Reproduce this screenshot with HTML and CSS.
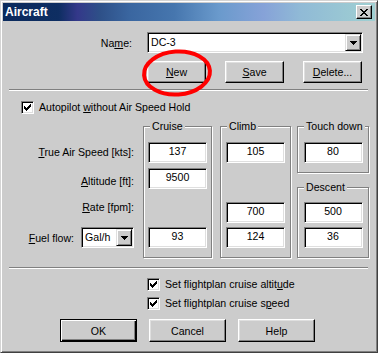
FILE: index.html
```html
<!DOCTYPE html>
<html>
<head lang="en">
    <meta charset="UTF-8">
    <title>Aircraft</title>
    <link rel="stylesheet" href="styles.css">
</head>
<body>
<div class="window">
    <div class="titleBar">
        <span class="title">Aircraft</span>
        <span class="closeBtn">
            <svg width="8" height="7" viewBox="0 0 8 7"><path d="M0 0h2v1H0z M6 0h2v1H6z M1 1h2v1H1z M5 1h2v1H5z M2 2h4v1H2z M3 3h2v1H3z M2 4h4v1H2z M1 5h2v1H1z M5 5h2v1H5z M0 6h2v1H0z M6 6h2v1H6z"/></svg>
        </span>
    </div>
    <div class="content">
        <div class="nameRow">
            <span class="nameLabel">Na<u>m</u>e:</span>
            <div class="combo nameCombo">
                <span class="comboText">DC-3</span>
                <span class="dropBtn"><svg width="7" height="4" viewBox="0 0 7 4"><path d="M0 0h7v1H0z M1 1h5v1H1z M2 2h3v1H2z M3 3h1v1H3z"/></svg></span>
            </div>
        </div>
        <div class="btnRow">
            <button class="btn"><u>N</u>ew</button>
            <button class="btn"><u>S</u>ave</button>
            <button class="btn"><u>D</u>elete...</button>
        </div>
        <div class="sep"></div>
        <div class="check autopilot">
            <span class="box"><svg width="11" height="11" viewBox="0 0 11 11"><path d="M2 4h1v3H2z M3 5h1v3H3z M4 6h1v3H4z M5 5h1v3H5z M6 4h1v3H6z M7 3h1v3H7z M8 2h1v3H8z"/></svg></span>
            <span>Autopilot <u>w</u>ithout Air Speed Hold</span>
        </div>
        <div class="groups">
            <div class="labels">
                <div class="lbl"><u>T</u>rue Air Speed [kts]:</div>
                <div class="lbl lblAlt"><u>A</u>ltitude [ft]:</div>
                <div class="lbl lblRate"><u>R</u>ate [fpm]:</div>
                <div class="fuelRow">
                    <span><u>F</u>uel flow:</span>
                    <div class="combo fuelCombo">
                        <span class="comboText">Gal/h</span>
                        <span class="dropBtn"><svg width="7" height="4" viewBox="0 0 7 4"><path d="M0 0h7v1H0z M1 1h5v1H1z M2 2h3v1H2z M3 3h1v1H3z"/></svg></span>
                    </div>
                </div>
            </div>
            <div class="group cruise">
                <span class="legend">Cruise</span>
                <div class="field">137</div>
                <div class="field gap5">9500</div>
                <div class="field gap38">93</div>
            </div>
            <div class="group climb">
                <span class="legend">Climb</span>
                <div class="field">105</div>
                <div class="field gap39">700</div>
                <div class="field gap4">124</div>
            </div>
            <div class="rightCol">
                <div class="group touchdown">
                    <span class="legend">Touch down</span>
                    <div class="field">80</div>
                </div>
                <div class="group descent">
                    <span class="legend">Descent</span>
                    <div class="field">500</div>
                    <div class="field gap4">36</div>
                </div>
            </div>
        </div>
        <div class="sep sep2"></div>
        <div class="check flightCheck">
            <span class="box"><svg width="11" height="11" viewBox="0 0 11 11"><path d="M2 4h1v3H2z M3 5h1v3H3z M4 6h1v3H4z M5 5h1v3H5z M6 4h1v3H6z M7 3h1v3H7z M8 2h1v3H8z"/></svg></span>
            <span>Set flightplan cruise altit<u>u</u>de</span>
        </div>
        <div class="check flightCheck speedCheck">
            <span class="box"><svg width="11" height="11" viewBox="0 0 11 11"><path d="M2 4h1v3H2z M3 5h1v3H3z M4 6h1v3H4z M5 5h1v3H5z M6 4h1v3H6z M7 3h1v3H7z M8 2h1v3H8z"/></svg></span>
            <span>Set flightplan cruise s<u>p</u>eed</span>
        </div>
        <div class="bottomRow">
            <button class="btn bigBtn defaultBtn">OK</button>
            <button class="btn bigBtn">Cancel</button>
            <button class="btn bigBtn">Help</button>
        </div>
    </div>
    <svg class="mark" width="78" height="54" viewBox="0 0 78 54">
        <ellipse cx="37" cy="26" rx="33" ry="21.5" fill="none" stroke="#f00" stroke-width="4" transform="rotate(-4 37 26)"/>
    </svg>
</div>
</body>
</html>
```

FILE: styles.css
```css
*{padding: 0;margin: 0;}
body{
    background: #cccccc;
    font-family: "Liberation Sans", Arial, sans-serif;
    font-size: 10.6px;
    color: #000;
}
.window{
    position: relative;
    box-sizing: border-box;
    width: 378px;
    height: 353px;
    padding: 2px;
    background: #cccccc;
    border: 1px solid;
    border-color: #d4d4d4 #404040 #404040 #d4d4d4;
    box-shadow: inset 1px 1px #fff, inset -1px -1px #808080;
}
.titleBar{
    display: flex;
    align-items: center;
    justify-content: space-between;
    height: 18px;
    padding-left: 2px;
    background: linear-gradient(to right, #0a2a5c 0%, #0e2e62 15%, #34388a 20%, #2e5088 26%, #3a66a0 34%, #4676ae 46%, #6a9acc 58%, #86a2d8 70%, #90bad6 80%, #a0d0d2 100%);
}
.title{
    color: #fff;
    font-weight: bold;
    font-size: 12px;
    line-height: 18px;
}
.closeBtn{
    box-sizing: border-box;
    display: flex;
    align-items: center;
    justify-content: center;
    width: 16px;
    height: 14px;
    margin-right: 3px;
    background: #cccccc;
    border: 1px solid;
    border-color: #fff #000 #000 #fff;
    box-shadow: inset -1px -1px #808080;
}
.nameRow{
    display: flex;
    align-items: center;
    margin-top: 11px;
    height: 21px;
}
.nameLabel{
    width: 129px;
    text-align: right;
}
.combo{
    box-sizing: border-box;
    display: flex;
    align-items: center;
    justify-content: space-between;
    height: 21px;
    background: #fff;
    border: 1px solid;
    border-color: #808080 #fff #fff #808080;
    box-shadow: inset 1px 1px #000, inset -1px -1px #dfdfdf;
    padding: 1px;
}
.nameCombo{
    width: 216px;
    margin-left: 15px;
}
.comboText{
    padding-left: 2px;
    padding-bottom: 2px;
}
.dropBtn{
    box-sizing: border-box;
    display: flex;
    align-items: center;
    justify-content: center;
    width: 16px;
    height: 17px;
    background: #cccccc;
    border: 1px solid;
    border-color: #dfdfdf #000 #000 #dfdfdf;
    box-shadow: inset 1px 1px #fff, inset -1px -1px #808080;
}
.btnRow{
    display: flex;
    gap: 19px;
    margin-top: 8px;
    padding-left: 144px;
}
.btn{
    box-sizing: border-box;
    width: 59px;
    height: 22px;
    background: #cccccc;
    border: 1px solid;
    border-color: #fff #000 #000 #fff;
    box-shadow: inset -1px -1px #808080, inset 1px 1px #dfdfdf;
    font-family: "Liberation Sans", Arial, sans-serif;
    font-size: 10.6px;
    color: #000;
}
.sep{
    width: 359px;
    margin: 6px 0 0 6px;
    border-top: 1px solid #808080;
    border-bottom: 1px solid #fff;
}
.check{
    display: flex;
    align-items: center;
    height: 13px;
    line-height: 13px;
}
.box{
    box-sizing: border-box;
    display: block;
    width: 13px;
    height: 13px;
    margin-right: 5px;
    background: #fff;
    border: 1px solid;
    border-color: #808080 #fff #fff #808080;
    box-shadow: inset 1px 1px #000, inset -1px -1px #dfdfdf;
}
.box svg{display: block;}
.autopilot{
    margin-top: 10px;
    padding-left: 18px;
}
.groups{
    display: flex;
    margin-top: 12px;
    height: 132px;
}
.labels{
    width: 131px;
    padding-top: 16px;
    text-align: right;
}
.lbl{
    height: 21px;
    line-height: 21px;
}
.lblAlt{margin-top: 8px;}
.lblRate{margin-top: 5px;}
.fuelRow{
    display: flex;
    align-items: center;
    justify-content: flex-end;
    margin-top: 9px;
    height: 21px;
}
.fuelCombo{
    width: 53px;
    margin-left: 7px;
}
.group{
    position: relative;
    box-sizing: border-box;
    display: flex;
    flex-direction: column;
    align-items: center;
    border: 1px solid #808080;
    box-shadow: inset 1px 1px #fff, 1px 1px #fff;
    padding-top: 15px;
}
.legend{
    position: absolute;
    top: -7px;
    left: 6px;
    padding: 0 2px;
    line-height: 12px;
    background: #cccccc;
}
.cruise{
    width: 69px;
    margin-left: 9px;
}
.climb{
    width: 71px;
    margin-left: 8px;
}
.rightCol{
    display: flex;
    flex-direction: column;
    width: 72px;
    margin-left: 6px;
}
.touchdown{height: 47px;}
.descent{
    flex: 1;
    margin-top: 14px;
    padding-top: 14px;
}
.field{
    box-sizing: border-box;
    width: 59px;
    height: 21px;
    background: #fff;
    border: 1px solid;
    border-color: #808080 #fff #fff #808080;
    box-shadow: inset 1px 1px #000, inset -1px -1px #dfdfdf;
    text-align: center;
    line-height: 17px;
}
.gap4{margin-top: 4px;}
.gap5{margin-top: 5px;}
.gap38{margin-top: 38px;}
.gap39{margin-top: 39px;}
.sep2{margin-top: 9px;}
.flightCheck{
    margin-top: 9px;
    padding-left: 144px;
}
.speedCheck{margin-top: 6px;}
.bottomRow{
    display: flex;
    gap: 12px;
    margin-top: 9px;
    padding-left: 57px;
}
.bigBtn{
    width: 77px;
    height: 23px;
}
.defaultBtn{
    border-color: #000;
    box-shadow: inset 1px 1px #fff, inset -1px -1px #000, inset -2px -2px #808080;
}
.mark{
    position: absolute;
    left: 139px;
    top: 46px;
}
```
